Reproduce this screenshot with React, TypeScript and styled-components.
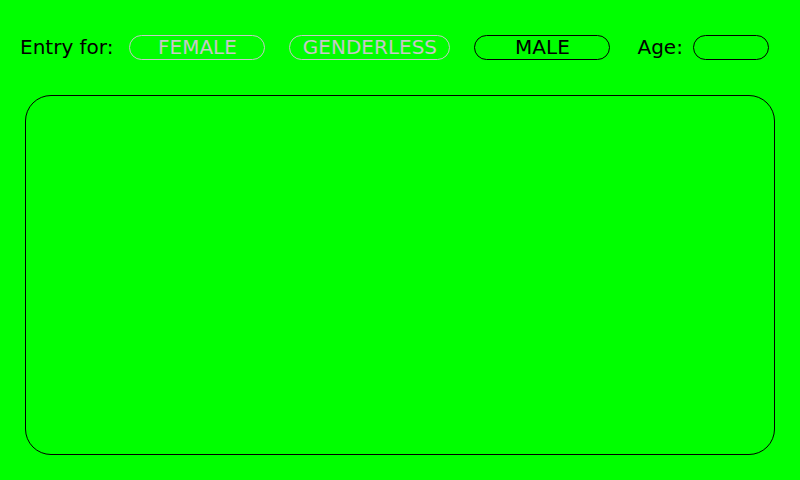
import React from "react";
import styled, { createGlobalStyle } from "styled-components";

const Global = createGlobalStyle`
  html, body { margin: 0; padding: 0; background: #00ff00; }
  body { font-family: "DejaVu Sans", "Liberation Sans", sans-serif; }
`;

const Screen = styled.div`
  width: 800px;
  height: 480px;
  box-sizing: border-box;
  background: #00ff00;
  display: flex;
  flex-direction: column;
  padding-top: 35px;
  overflow: hidden;
`;

const TopBar = styled.div`
  display: flex;
  align-items: center;
  height: 25px;
  padding-left: 20px;
`;

const Label = styled.span<{ $ml?: number; $mr?: number }>`
  font-size: 20px;
  line-height: 25px;
  color: #000;
  white-space: nowrap;
  margin-left: ${(p) => p.$ml ?? 0}px;
  margin-right: ${(p) => p.$mr ?? 0}px;
`;

const Pill = styled.div<{ $w: number; $active?: boolean; $ml?: number }>`
  box-sizing: border-box;
  width: ${(p) => p.$w}px;
  height: 25px;
  margin-left: ${(p) => p.$ml ?? 0}px;
  border: 1px solid ${(p) => (p.$active ? "#000" : "#c8c8c8")};
  border-radius: 13px;
  color: ${(p) => (p.$active ? "#000" : "#c8c8c8")};
  font-size: 20px;
  line-height: 23px;
  display: flex;
  align-items: center;
  justify-content: center;
  white-space: nowrap;
`;

const Panel = styled.div`
  box-sizing: border-box;
  margin: 35px 25px 0 25px;
  width: 750px;
  height: 360px;
  border: 1px solid #000;
  border-radius: 26px;
`;

export default function App() {
  return (
    <>
      <Global />
      <Screen>
        <TopBar>
          <Label $mr={16}>Entry for:</Label>
          <Pill $w={136}>FEMALE</Pill>
          <Pill $w={161} $ml={24}>GENDERLESS</Pill>
          <Pill $w={136} $ml={24} $active>MALE</Pill>
          <Label $ml={27} $mr={10}>Age:</Label>
          <Pill $w={76} $active />
        </TopBar>
        <Panel />
      </Screen>
    </>
  );
}
